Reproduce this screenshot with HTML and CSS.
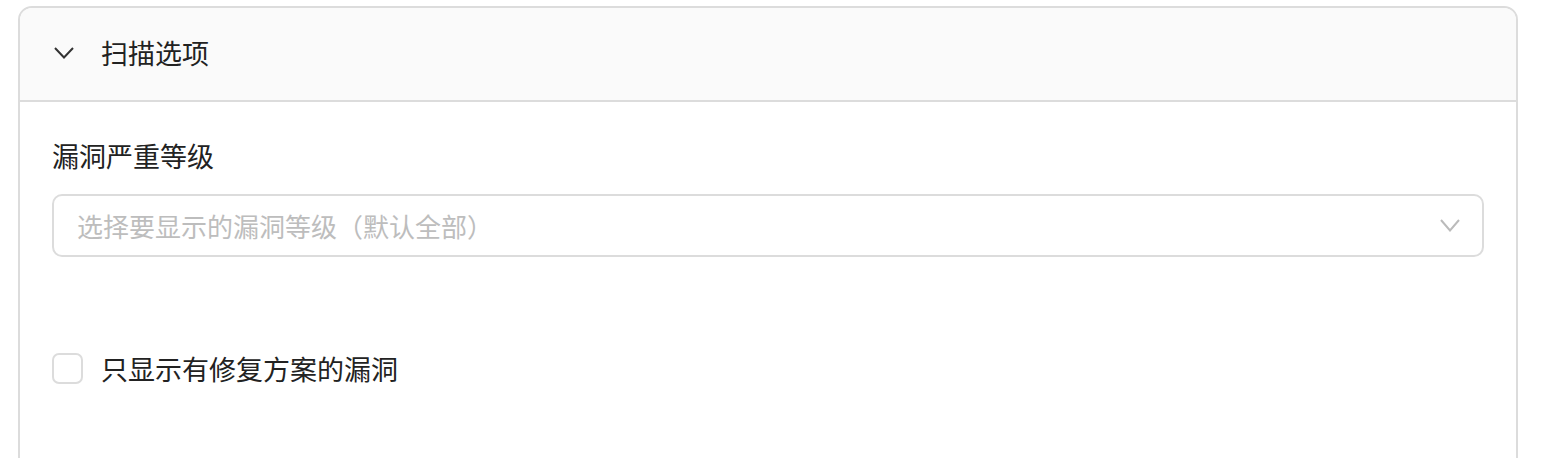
FILE: index.html
```html
<!DOCTYPE html>
<html lang="zh-CN">
<head>
<meta charset="UTF-8" />
<meta name="viewport" content="width=device-width, initial-scale=1.0" />
<title>扫描选项</title>
<link rel="stylesheet" href="styles.css">
</head>
<body>

<section class="panel">
  <div class="panel-header">
    <svg class="chevron" width="20" height="12" viewBox="0 0 20 12">
      <path d="M1 1 L10 10.5 L19 1" fill="none" stroke="#333" stroke-width="2" />
    </svg>
    <span class="panel-title">扫描选项</span>
  </div>

  <div class="panel-body">
    <div class="field">
      <label class="field-label">漏洞严重等级</label>
      <div class="select">
        <span class="select-placeholder">选择要显示的漏洞等级（默认全部）</span>
        <svg class="select-arrow" width="20" height="13" viewBox="0 0 20 13">
          <path d="M1 1 L10 11.5 L19 1" fill="none" stroke="#bbb" stroke-width="2" />
        </svg>
      </div>
    </div>

    <label class="check">
      <span class="check-box"></span>
      <span class="check-text">只显示有修复方案的漏洞</span>
    </label>
  </div>
</section>

</body>
</html>
```

FILE: styles.css
```css
body {
  margin: 0;
  padding: 6px 30px 0 18px;
  font-family: "Noto Sans CJK SC", "Noto Sans", sans-serif;
  color: #222;
  background: #fff;
}
.panel {
  width: 1500px;
  box-sizing: border-box;
  border: 2px solid #dcdcdc;
  border-radius: 14px;
  overflow: hidden;
  min-height: 600px;
}
.panel-header {
  height: 92px;
  display: flex;
  align-items: center;
  padding-left: 34px;
  background: #fafafa;
  border-bottom: 2px solid #dcdcdc;
}
.chevron {
  margin-right: 27px;
  margin-top: -2px;
}
.panel-title {
  font-size: 27px;
  line-height: 36px;
  margin-top: -2px;
}
.panel-body {
  padding: 32px 32px;
}
.field-label {
  display: block;
  font-size: 27px;
  line-height: 44px;
  margin-bottom: 16px;
}
.select {
  height: 63px;
  box-sizing: border-box;
  border: 2px solid #dcdcdc;
  border-radius: 10px;
  display: flex;
  align-items: center;
  justify-content: space-between;
  padding: 0 22px 0 23px;
}
.select-placeholder {
  font-size: 26px;
  color: #bdbdbd;
}
.check {
  display: flex;
  align-items: center;
  margin-top: 92px;
}
.check-box {
  width: 31px;
  height: 31px;
  box-sizing: border-box;
  border: 2px solid #dcdcdc;
  border-radius: 7px;
  margin-right: 18px;
}
.check-text {
  font-size: 27px;
}
```
